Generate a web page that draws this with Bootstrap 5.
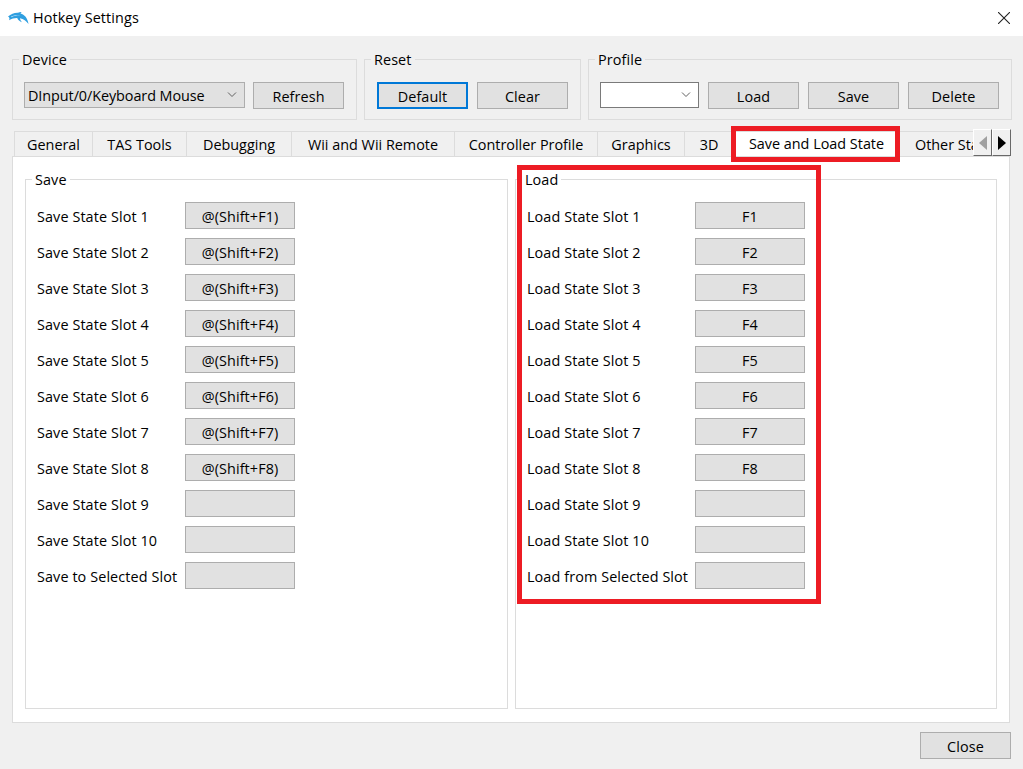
<!DOCTYPE html>
<html lang="en">
<head>
<meta charset="utf-8">
<title>Hotkey Settings</title>
<link href="https://cdn.jsdelivr.net/npm/bootstrap@5.3.0/dist/css/bootstrap.min.css" rel="stylesheet">
<style>
html,body{height:769px;overflow:hidden}
body{background:#f0f0f0;color:#000;font-family:"Open Sans","Noto Sans","Liberation Sans",sans-serif;font-size:14.4px;letter-spacing:.1px;line-height:20px}
.hk-canvas{width:1023px;height:769px;position:relative}
.hk-title{height:36px;background:#fff;padding-left:8px}
.hk-title-text{margin-left:4px}
.hk-close{margin-right:13px}
.hk-body{padding:13px 11px 0 12px}
.hk-group{border:1px solid #dcdcdc;margin:0;min-width:0;flex:none}
.hk-group legend{float:none;width:auto;font-size:14.4px;line-height:20px;margin:0 0 0 -5px;padding:1px 3px 0}
.hk-group-top{padding:12px 11px 10px}
.hk-topbar{gap:7px}
.hk-w-device{width:345px}
.hk-w-reset{width:217px;padding-left:12px}
.hk-w-reset legend{margin-left:-6px}
.hk-w-profile{width:424px}
.hk-gap-9{gap:9px}
.hk-btn{width:91px;height:27px;padding:2px 0 0;border:1px solid #adadad;border-radius:0;background:#e1e1e1;color:#000;font-size:14.4px;letter-spacing:.1px;line-height:23px;flex:none;--bs-btn-hover-bg:#e1e1e1;--bs-btn-hover-border-color:#adadad}
.hk-btn-focus{border:2px solid #0078d7;padding-top:1px}
.hk-key{width:110px}
.hk-select{height:26px;border:1px solid #adadad;border-radius:0;padding:1px 24px 0 3px;font-size:14.4px;letter-spacing:-.07px;line-height:22px;color:#000;background-color:#e1e1e1;--bs-form-select-bg-img:url("data:image/svg+xml,%3csvg xmlns='http://www.w3.org/2000/svg' viewBox='0 0 10 6'%3e%3cpath fill='none' stroke='%23606060' d='M1 .5l4 4 4-4'/%3e%3c/svg%3e");background-size:10px 6px;background-position:right 7px center}
.hk-select-device{width:221px}
.hk-select-profile{width:99px;background-color:#fff;border-color:#7a7a7a}
.hk-tabs{position:relative;height:25px;margin:11px 0 0 2px;width:997px;border:0;flex-wrap:nowrap;overflow:hidden}
.hk-tab{height:25px;border:1px solid #dcdcdc;border-bottom:0;border-left:0;background:#f0f0f0;text-align:center;line-height:25px;flex:none;white-space:nowrap;letter-spacing:0}
.hk-tab:first-child{border-left:1px solid #dcdcdc}
.hk-tab-on{background:#fff;line-height:23px}
.hk-tw1{width:79px}.hk-tw2{width:94px}.hk-tw3{width:105px}.hk-tw4{width:163px}.hk-tw5{width:143px}.hk-tw6{width:87px}.hk-tw7{width:49px}.hk-tw8{width:166px}.hk-tw9{width:108px}
.hk-pane{width:998px;height:567px;background:#fff;border:1px solid #dcdcdc;padding:12px 12px 13px;gap:7px}
.hk-col{height:100%;padding:12px 11px 0}
.hk-col-save{width:483px}
.hk-col-load{width:482px}
.hk-label{width:148px;white-space:nowrap;padding-top:2px}
.hk-label-load{width:168px}
.hk-rows{gap:9px}
.hk-row-h{height:27px}
.hk-foot{padding:9px 1px 0 0}
.hk-scroll{position:absolute;left:973px;top:129px;width:38px;height:27px;z-index:3}
.hk-scroll-b{width:19px;height:27px;background:#f0f0f0;border:1px solid #fff;border-right-color:#696969;border-bottom-color:#696969}
.hk-red{position:absolute;border:5px solid #ed1c24;pointer-events:none;z-index:4}
.hk-red-tab{left:731px;top:126px;width:169px;height:36px}
.hk-red-load{left:517px;top:165px;width:304px;height:439px}
</style>
</head>
<body>
<div class="hk-canvas">
  <div class="hk-title d-flex align-items-center">
    <svg width="21" height="13" viewBox="0 0 21 13"><path fill="#2f9fe0" d="M0 4.500C3 2 6.500.5 10 .7c1.200-.5 2.400-.7 3.700-.6-.6.400-1 1-1.200 1.500C16.500 2.700 19.500 6 20.500 12c-2.200-3-5-5-8.500-5.700.1 1.500.8 2.800 2 3.900-2.300-.6-4-2-4.800-4.100C6.500 6 3.800 6.800 1 8.200 1.700 7 1.800 5.600 0 4.500Z"/><path fill="#bfe3f7" d="M3 4.500C6 3 9.500 2.400 13 3.400 9.500 3.200 6.500 3.700 3.500 5.200Z"/></svg>
    <span class="hk-title-text flex-grow-1">Hotkey Settings</span>
    <svg class="hk-close" width="12" height="12" viewBox="0 0 12 12"><path stroke="#222" stroke-width="1.100" fill="none" d="M0 0L12 12M12 0L0 12"/></svg>
  </div>
  <div class="hk-body">
    <div class="d-flex hk-topbar">
      <fieldset class="hk-group hk-group-top hk-w-device">
        <legend>Device</legend>
        <div class="d-flex gap-2"><select class="form-select hk-select hk-select-device"><option>DInput/0/Keyboard Mouse</option></select><button class="btn hk-btn">Refresh</button></div>
      </fieldset>
      <fieldset class="hk-group hk-group-top hk-w-reset">
        <legend>Reset</legend>
        <div class="d-flex hk-gap-9"><button class="btn hk-btn hk-btn-focus">Default</button><button class="btn hk-btn">Clear</button></div>
      </fieldset>
      <fieldset class="hk-group hk-group-top hk-w-profile">
        <legend>Profile</legend>
        <div class="d-flex hk-gap-9"><select class="form-select hk-select hk-select-profile"><option></option></select><button class="btn hk-btn">Load</button><button class="btn hk-btn">Save</button><button class="btn hk-btn">Delete</button></div>
      </fieldset>
    </div>
    <ul class="nav hk-tabs">
      <li class="hk-tab hk-tw1">General</li>
      <li class="hk-tab hk-tw2">TAS Tools</li>
      <li class="hk-tab hk-tw3">Debugging</li>
      <li class="hk-tab hk-tw4">Wii and Wii Remote</li>
      <li class="hk-tab hk-tw5">Controller Profile</li>
      <li class="hk-tab hk-tw6">Graphics</li>
      <li class="hk-tab hk-tw7">3D</li>
      <li class="hk-tab hk-tab-on hk-tw8">Save and Load State</li>
      <li class="hk-tab hk-tw9">Other State</li>
    </ul>
    <div class="hk-pane d-flex">
      <fieldset class="hk-group hk-col hk-col-save">
        <legend>Save</legend>
        <div class="d-flex flex-column hk-rows">
          <div class="d-flex align-items-center hk-row-h"><span class="hk-label">Save State Slot 1</span><button class="btn hk-btn hk-key">@(Shift+F1)</button></div>
          <div class="d-flex align-items-center hk-row-h"><span class="hk-label">Save State Slot 2</span><button class="btn hk-btn hk-key">@(Shift+F2)</button></div>
          <div class="d-flex align-items-center hk-row-h"><span class="hk-label">Save State Slot 3</span><button class="btn hk-btn hk-key">@(Shift+F3)</button></div>
          <div class="d-flex align-items-center hk-row-h"><span class="hk-label">Save State Slot 4</span><button class="btn hk-btn hk-key">@(Shift+F4)</button></div>
          <div class="d-flex align-items-center hk-row-h"><span class="hk-label">Save State Slot 5</span><button class="btn hk-btn hk-key">@(Shift+F5)</button></div>
          <div class="d-flex align-items-center hk-row-h"><span class="hk-label">Save State Slot 6</span><button class="btn hk-btn hk-key">@(Shift+F6)</button></div>
          <div class="d-flex align-items-center hk-row-h"><span class="hk-label">Save State Slot 7</span><button class="btn hk-btn hk-key">@(Shift+F7)</button></div>
          <div class="d-flex align-items-center hk-row-h"><span class="hk-label">Save State Slot 8</span><button class="btn hk-btn hk-key">@(Shift+F8)</button></div>
          <div class="d-flex align-items-center hk-row-h"><span class="hk-label">Save State Slot 9</span><button class="btn hk-btn hk-key"></button></div>
          <div class="d-flex align-items-center hk-row-h"><span class="hk-label">Save State Slot 10</span><button class="btn hk-btn hk-key"></button></div>
          <div class="d-flex align-items-center hk-row-h"><span class="hk-label">Save to Selected Slot</span><button class="btn hk-btn hk-key"></button></div>
        </div>
      </fieldset>
      <fieldset class="hk-group hk-col hk-col-load">
        <legend>Load</legend>
        <div class="d-flex flex-column hk-rows">
          <div class="d-flex align-items-center hk-row-h"><span class="hk-label hk-label-load">Load State Slot 1</span><button class="btn hk-btn hk-key">F1</button></div>
          <div class="d-flex align-items-center hk-row-h"><span class="hk-label hk-label-load">Load State Slot 2</span><button class="btn hk-btn hk-key">F2</button></div>
          <div class="d-flex align-items-center hk-row-h"><span class="hk-label hk-label-load">Load State Slot 3</span><button class="btn hk-btn hk-key">F3</button></div>
          <div class="d-flex align-items-center hk-row-h"><span class="hk-label hk-label-load">Load State Slot 4</span><button class="btn hk-btn hk-key">F4</button></div>
          <div class="d-flex align-items-center hk-row-h"><span class="hk-label hk-label-load">Load State Slot 5</span><button class="btn hk-btn hk-key">F5</button></div>
          <div class="d-flex align-items-center hk-row-h"><span class="hk-label hk-label-load">Load State Slot 6</span><button class="btn hk-btn hk-key">F6</button></div>
          <div class="d-flex align-items-center hk-row-h"><span class="hk-label hk-label-load">Load State Slot 7</span><button class="btn hk-btn hk-key">F7</button></div>
          <div class="d-flex align-items-center hk-row-h"><span class="hk-label hk-label-load">Load State Slot 8</span><button class="btn hk-btn hk-key">F8</button></div>
          <div class="d-flex align-items-center hk-row-h"><span class="hk-label hk-label-load">Load State Slot 9</span><button class="btn hk-btn hk-key"></button></div>
          <div class="d-flex align-items-center hk-row-h"><span class="hk-label hk-label-load">Load State Slot 10</span><button class="btn hk-btn hk-key"></button></div>
          <div class="d-flex align-items-center hk-row-h"><span class="hk-label hk-label-load">Load from Selected Slot</span><button class="btn hk-btn hk-key"></button></div>
        </div>
      </fieldset>
    </div>
    <div class="d-flex justify-content-end hk-foot"><button class="btn hk-btn">Close</button></div>
  </div>
  <div class="hk-scroll d-flex">
    <div class="hk-scroll-b d-flex align-items-center justify-content-center"><svg width="8" height="14" viewBox="0 0 8 14"><path fill="#a0a0a0" d="M8 0V14L0 7Z"/></svg></div>
    <div class="hk-scroll-b d-flex align-items-center justify-content-center"><svg width="8" height="14" viewBox="0 0 8 14"><path fill="#000" d="M0 0V14L8 7Z"/></svg></div>
  </div>
  <div class="hk-red hk-red-tab"></div>
  <div class="hk-red hk-red-load"></div>
</div>
</body>
</html>
